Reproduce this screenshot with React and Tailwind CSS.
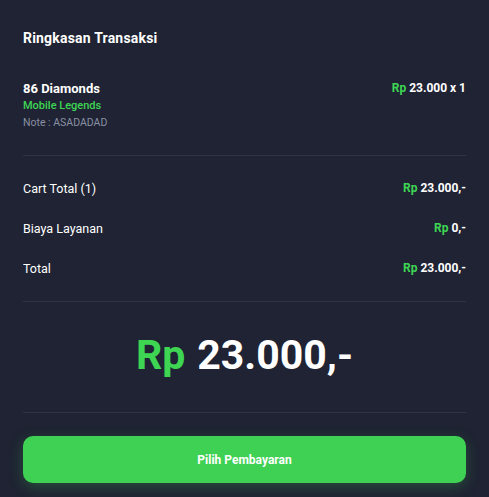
import React from 'react';

const rows = [
  { label: 'Cart Total (1)', value: '23.000,-' },
  { label: 'Biaya Layanan', value: '0,-' },
  { label: 'Total', value: '23.000,-' },
];

const App = () => {
  return (
    <div className="min-h-[497px] w-full bg-[#1f2333] px-[23px] pt-[28px] text-white" style={{ fontFamily: 'Roboto, "Liberation Sans", sans-serif' }}>
      <h2 className="text-[14px] font-bold leading-[20px] tracking-[0.2px]">Ringkasan Transaksi</h2>

      <div className="mt-[32px] flex items-start justify-between pb-[24px]">
        <div>
          <p className="text-[13px] font-bold leading-[17px]">86 Diamonds</p>
          <p className="text-[11px] font-medium leading-[17px] text-[#3ed553]">Mobile Legends</p>
          <p className="text-[10.5px] leading-[17px] text-[#8a90a3]">Note : ASADADAD</p>
        </div>
        <p className="text-[12px] font-bold leading-[17px]">
          <span className="text-[#3ed553]">Rp</span> 23.000 x 1
        </p>
      </div>

      <div className="border-t border-[#2f3445]" />

      <div className="flex flex-col gap-[23px] py-[24px]">
        {rows.map((r) => (
          <div key={r.label} className="flex items-center justify-between leading-[17px]">
            <span className="text-[12.5px]">{r.label}</span>
            <span className="text-[12px] font-bold">
              <span className="text-[#3ed553]">Rp</span> {r.value}
            </span>
          </div>
        ))}
      </div>

      <div className="border-t border-[#2f3445]" />

      <div className="flex h-[110px] items-center justify-center pb-[2px] text-[41px] font-bold">
        <span className="text-[#3ed553]">Rp</span>
        <span className="ml-[12px]">23.000,-</span>
      </div>

      <div className="border-t border-[#2f3445]" />

      <button className="mt-[23px] flex h-[47px] w-full items-center justify-center rounded-[10px] bg-[#3ed153] text-[12px] font-bold shadow-[0_4px_14px_rgba(62,209,83,0.25)]">
        Pilih Pembayaran
      </button>
    </div>
  );
};

export default App;
